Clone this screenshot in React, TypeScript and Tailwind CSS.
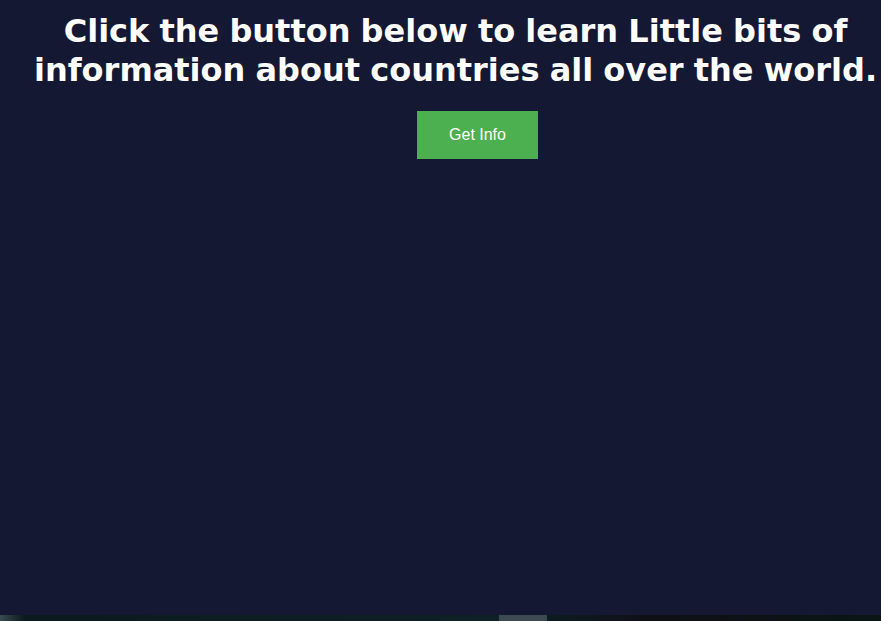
import React from 'react';

const App = () => {
  return (
    <div className="min-h-screen bg-[#141833] flex flex-col">
      {/* Intro */}
      <main className="h-[615px] pl-[30px] pt-[12px]">
        <h1 className="text-center text-white text-[32px] leading-[39px] font-bold [word-spacing:-1px] font-['DejaVu_Sans',sans-serif]">
          Click the button below to learn Little bits of information about countries all over the world.
        </h1>
        <div className="flex justify-center pl-[44px] mt-[21px]">
          <button className="bg-[#4caf50] text-white text-base leading-[18px] px-[32px] py-[15px] font-['Liberation_Sans',Arial,sans-serif]">
            Get Info
          </button>
        </div>
      </main>

      {/* bottom edge of the next section */}
      <div className="h-[6px] flex">
        <div className="w-[499px] bg-gradient-to-r from-[#3a4a52] via-[#0b1a1c] via-[5%] to-[#0e2126]"></div>
        <div className="w-[48px] bg-[#3d4a52]"></div>
        <div className="flex-1 bg-gradient-to-r from-[#0c1c1f] via-[#0f1016] via-[30%] to-[#0a1514]"></div>
      </div>
    </div>
  );
};

export default App;
